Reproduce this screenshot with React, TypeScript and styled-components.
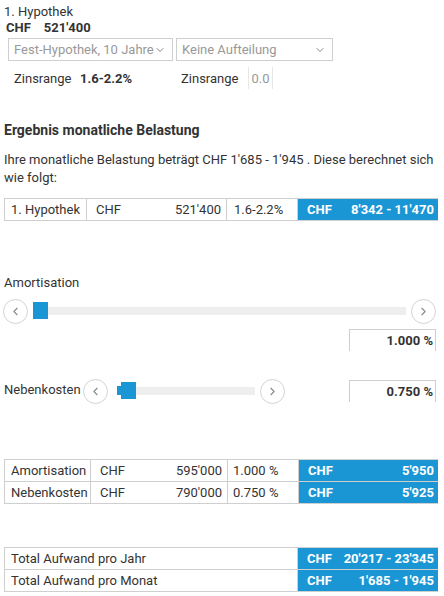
import styled, { createGlobalStyle } from 'styled-components';
import { ChevronDown, ChevronLeft, ChevronRight } from 'lucide-react';

const GlobalStyle = createGlobalStyle`
  body {
    margin: 0;
    background: #fff;
    font-family: Roboto, "Liberation Sans", sans-serif;
    color: #333;
    font-size: 13px;
  }
`;

const blue = '#1b96d5';
const line = '#cfcfcf';

const Page = styled.div`
  width: 444px;
  padding: 4px 0 0 4px;
  box-sizing: border-box;
`;

const Title = styled.div`
  line-height: 16px;
`;

const Amount = styled.div`
  display: flex;
  gap: 13px;
  padding-left: 2px;
  font-weight: 700;
  line-height: 16px;
`;

const SelectRow = styled.div`
  display: flex;
  gap: 3px;
  margin: 2px 0 0 4px;
`;

const Select = styled.div<{ $w: number }>`
  width: ${p => p.$w}px;
  height: 23px;
  box-sizing: border-box;
  border: 1px solid ${line};
  display: flex;
  align-items: center;
  justify-content: space-between;
  padding: 0 6px 0 5px;
  color: #999;
  font-size: 13px;
  white-space: nowrap;
  overflow: hidden;
  svg { color: #888; flex-shrink: 0; }
`;

const RangeRow = styled.div`
  display: flex;
  align-items: center;
  height: 22px;
  margin-top: 6px;
  padding-left: 10px;
`;

const RangeLabel = styled.span<{ $w: number }>`
  width: ${p => p.$w}px;
`;

const RangeValue = styled.span`
  font-weight: 700;
  width: 101px;
`;

const RangeBox = styled.span`
  height: 22px;
  width: 25px;
  box-sizing: border-box;
  border-left: 1px solid #e6e6e6;
  border-right: 1px solid #e6e6e6;
  display: flex;
  align-items: center;
  justify-content: center;
  color: #999;
`;

const Heading = styled.h2`
  margin: 32px 0 0;
  font-size: 14px;
  font-weight: 700;
  line-height: 18px;
`;

const Text = styled.p`
  margin: 12px 0 0;
  line-height: 18px;
  padding-right: 6px;
`;

const Table = styled.div<{ $cols: string; $top: number }>`
  display: grid;
  grid-template-columns: ${p => p.$cols};
  width: 433px;
  margin-top: ${p => p.$top}px;
  border-top: 1px solid ${line};
  border-left: 1px solid ${line};
`;

const Cell = styled.div<{ $right?: boolean; $pl?: number }>`
  height: 21px;
  border-right: 1px solid ${line};
  border-bottom: 1px solid ${line};
  display: flex;
  align-items: center;
  justify-content: ${p => (p.$right ? 'space-between' : 'flex-start')};
  padding: 0 5px 0 ${p => p.$pl ?? 6}px;
  white-space: nowrap;
  font-size: 13px;
`;

const BlueCell = styled.div`
  height: 21px;
  background: ${blue};
  color: #fff;
  font-weight: 700;
  font-size: 13px;
  display: flex;
  align-items: center;
  justify-content: space-between;
  padding: 0 4px 0 9px;
  border-bottom: 1px solid ${line};
  white-space: nowrap;
`;

const Label = styled.div`
  margin-top: 53px;
  line-height: 18px;
`;

const SliderRow = styled.div`
  display: flex;
  align-items: center;
  margin: 7px 0 0 -1px;
  height: 24px;
`;

const RoundButton = styled.button`
  width: 25px;
  height: 25px;
  border-radius: 50%;
  border: 1px solid #d3d3d3;
  background: #fff;
  padding: 0;
  display: flex;
  align-items: center;
  justify-content: center;
  color: #888;
  flex-shrink: 0;
`;

const Track = styled.div<{ $w: number; $ml?: number }>`
  position: relative;
  width: ${p => p.$w}px;
  height: 8px;
  background: #eee;
  margin: 0 5px 0 ${p => p.$ml ?? 5}px;
`;

const Thumb = styled.div<{ $ledge?: boolean }>`
  position: absolute;
  left: ${p => (p.$ledge ? 3 : 0)}px;
  top: -5px;
  width: 15px;
  height: 17px;
  background: ${blue};
  &::before {
    content: '';
    display: ${p => (p.$ledge ? 'block' : 'none')};
    position: absolute;
    left: -4px;
    top: 4px;
    width: 5px;
    height: 9px;
    background: ${blue};
  }
`;

const InputBox = styled.div`
  width: 87px;
  height: 22px;
  box-sizing: border-box;
  border: 1px solid ${line};
  border-bottom: none;
  display: flex;
  align-items: center;
  justify-content: flex-end;
  padding-right: 2px;
  font-weight: 700;
  font-size: 13px;
`;

const InputRow = styled.div<{ $top?: number }>`
  display: flex;
  justify-content: flex-end;
  padding-right: 8px;
  margin-top: ${p => p.$top ?? 0}px;
`;

const CostRow = styled.div`
  display: flex;
  align-items: center;
  margin-top: 29px;
  height: 22px;
`;

const CostLabel = styled.span`
  width: 79px;
  margin-top: -4px;
`;

const Spacer = styled.div`
  flex: 1;
`;

const Inline = styled.div`
  display: flex;
  align-items: center;
`;

export default function App() {
  return (
    <Page>
      <GlobalStyle />
      <Title>1. Hypothek</Title>
      <Amount>
        <span>CHF</span>
        <span>521'400</span>
      </Amount>
      <SelectRow>
        <Select $w={165}>
          Fest-Hypothek, 10 Jahre <ChevronDown size={12} />
        </Select>
        <Select $w={157}>
          Keine Aufteilung <ChevronDown size={12} />
        </Select>
      </SelectRow>
      <RangeRow>
        <RangeLabel $w={66}>Zinsrange</RangeLabel>
        <RangeValue>1.6-2.2%</RangeValue>
        <RangeLabel $w={67}>Zinsrange</RangeLabel>
        <RangeBox>0.0</RangeBox>
      </RangeRow>

      <Heading>Ergebnis monatliche Belastung</Heading>
      <Text>
        Ihre monatliche Belastung beträgt CHF 1'685 - 1'945 . Diese berechnet sich wie folgt:
      </Text>

      <Table $cols="82px 140px 71px 140px" $top={11}>
        <Cell>1. Hypothek</Cell>
        <Cell $right $pl={9}>
          <span>CHF</span>
          <span>521'400</span>
        </Cell>
        <Cell $pl={7}>1.6-2.2%</Cell>
        <BlueCell>
          <span>CHF</span>
          <span>8'342 - 11'470</span>
        </BlueCell>
      </Table>

      <Label>Amortisation</Label>
      <SliderRow>
        <RoundButton>
          <ChevronLeft size={13} />
        </RoundButton>
        <Track $w={373}>
          <Thumb />
        </Track>
        <RoundButton>
          <ChevronRight size={13} />
        </RoundButton>
      </SliderRow>
      <InputRow $top={6}>
        <InputBox>1.000 %</InputBox>
      </InputRow>

      <CostRow>
        <CostLabel>Nebenkosten</CostLabel>
        <Inline>
          <RoundButton>
            <ChevronLeft size={13} />
          </RoundButton>
          <Track $w={137} $ml={10}>
            <Thumb $ledge />
          </Track>
          <RoundButton>
            <ChevronRight size={13} />
          </RoundButton>
        </Inline>
        <Spacer />
        <InputRow>
          <InputBox>0.750 %</InputBox>
        </InputRow>
      </CostRow>

      <Table $cols="86px 137px 71px 139px" $top={57}>
        <Cell>Amortisation</Cell>
        <Cell $right $pl={9}>
          <span>CHF</span>
          <span>595'000</span>
        </Cell>
        <Cell $pl={5}>1.000 %</Cell>
        <BlueCell>
          <span>CHF</span>
          <span>5'950</span>
        </BlueCell>
        <Cell>Nebenkosten</Cell>
        <Cell $right $pl={9}>
          <span>CHF</span>
          <span>790'000</span>
        </Cell>
        <Cell $pl={5}>0.750 %</Cell>
        <BlueCell>
          <span>CHF</span>
          <span>5'925</span>
        </BlueCell>
      </Table>

      <Table $cols="293px 140px" $top={43}>
        <Cell>Total Aufwand pro Jahr</Cell>
        <BlueCell>
          <span>CHF</span>
          <span>20'217 - 23'345</span>
        </BlueCell>
        <Cell>Total Aufwand pro Monat</Cell>
        <BlueCell>
          <span>CHF</span>
          <span>1'685 - 1'945</span>
        </BlueCell>
      </Table>
    </Page>
  );
}
